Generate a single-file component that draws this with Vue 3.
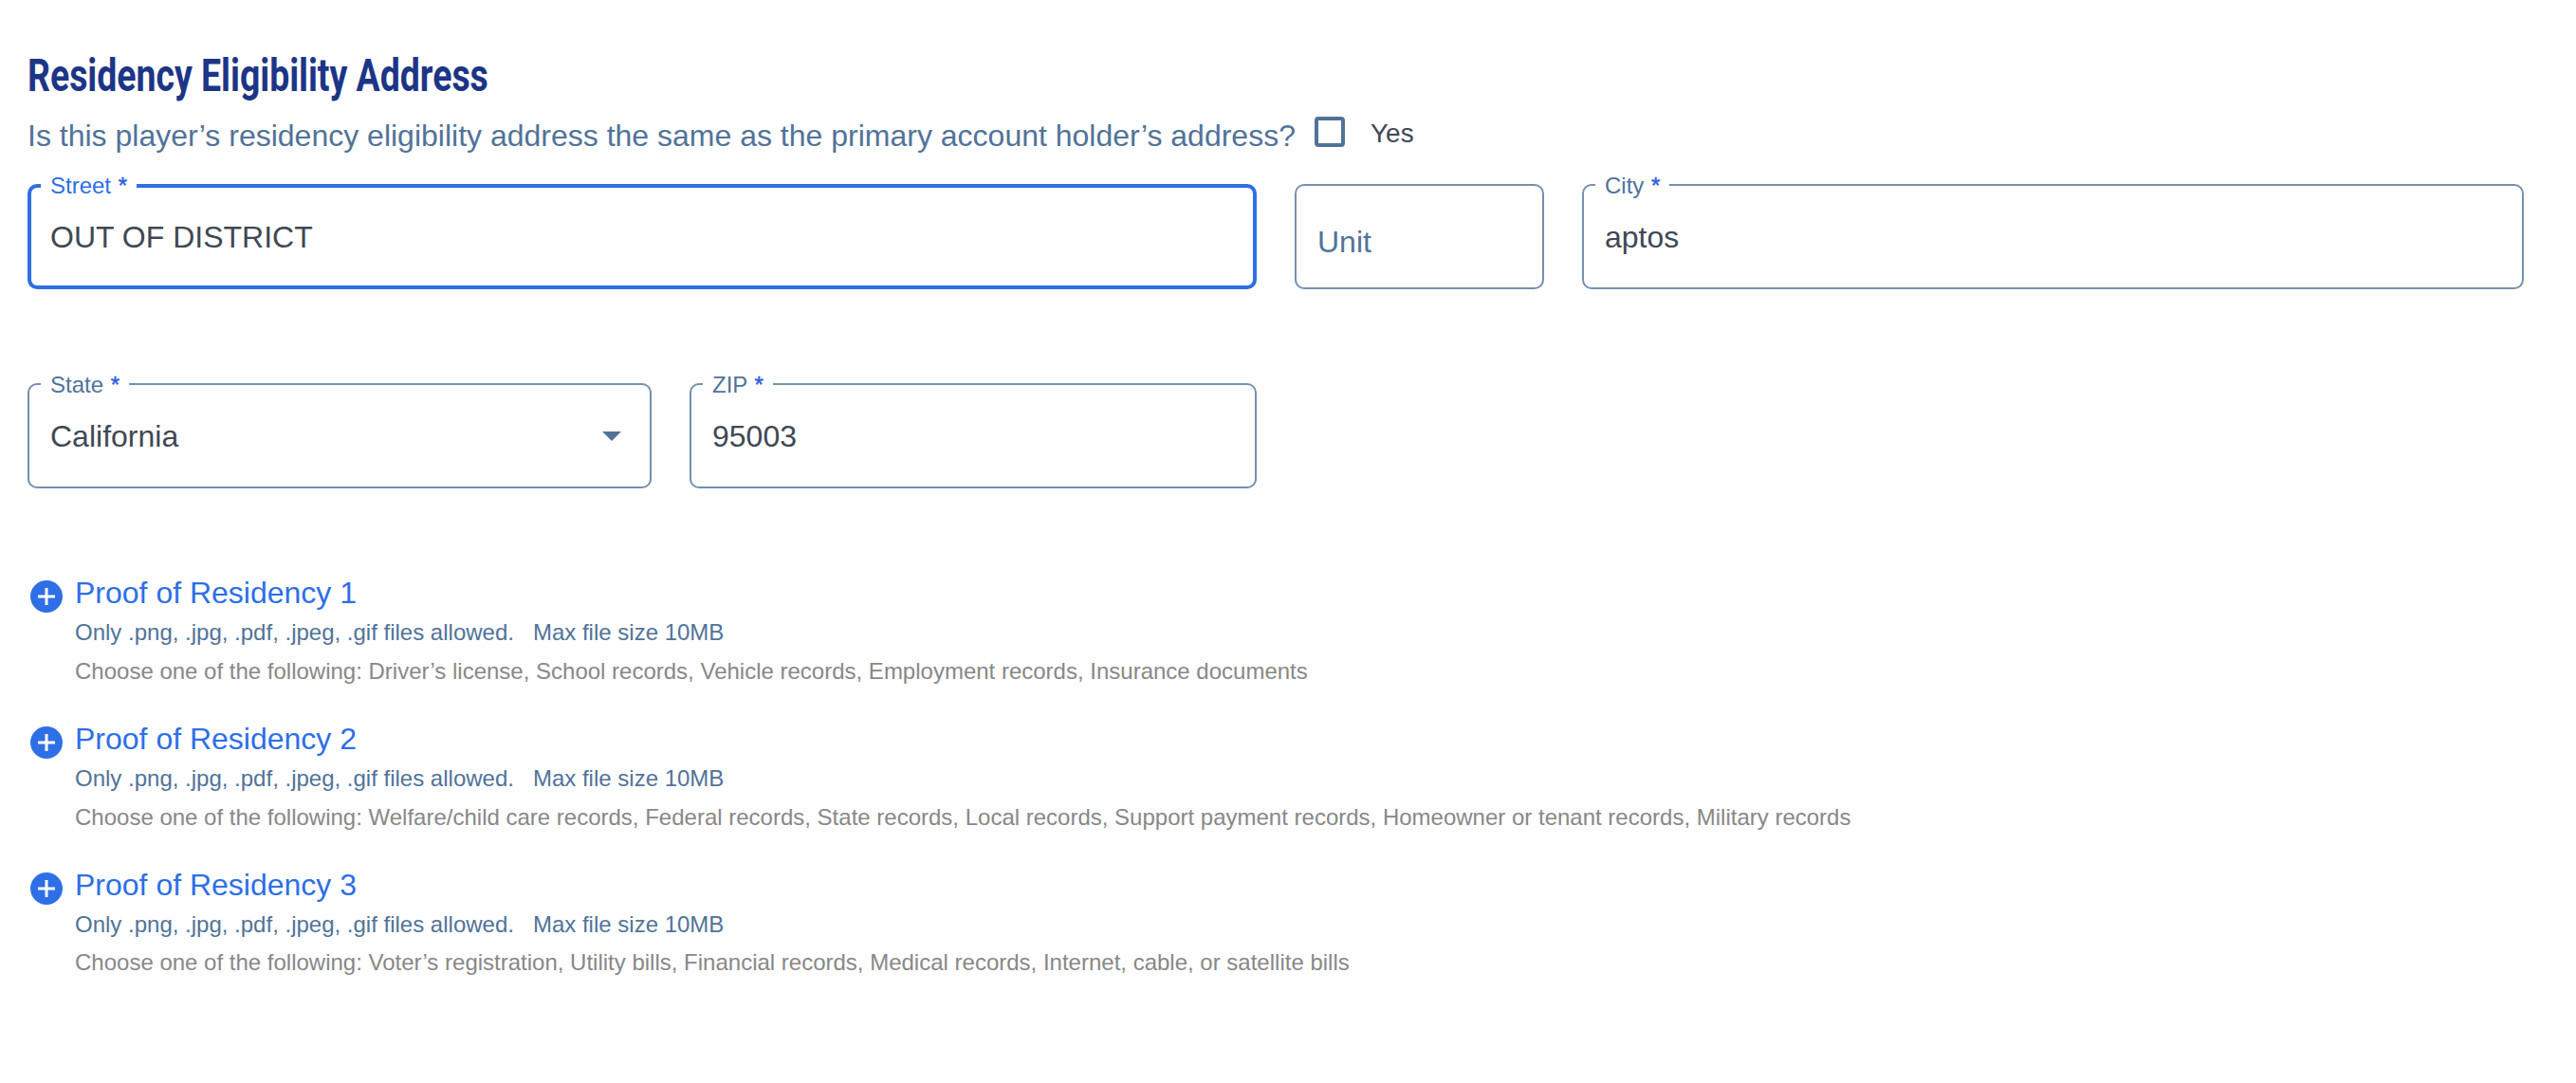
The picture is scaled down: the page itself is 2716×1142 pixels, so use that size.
<script setup>
const proofs = [
  { title: 'Proof of Residency 1', docs: 'Driver’s license, School records, Vehicle records, Employment records, Insurance documents' },
  { title: 'Proof of Residency 2', docs: 'Welfare/child care records, Federal records, State records, Local records, Support payment records, Homeowner or tenant records, Military records' },
  { title: 'Proof of Residency 3', docs: 'Voter’s registration, Utility bills, Financial records, Medical records, Internet, cable, or satellite bills' },
]
</script>

<template>
  <main class="page">
    <h2 class="title"><span>Residency Eligibility Address</span></h2>
    <div class="question">
      <span>Is this player’s residency eligibility address the same as the primary account holder’s address?</span>
      <label class="check"><span class="box"></span><span>Yes</span></label>
    </div>

    <div class="row">
      <div class="field street active">
        <span class="label">Street <span class="req">*</span></span>
        <span>OUT OF DISTRICT</span>
      </div>
      <div class="field unit"><span>Unit</span></div>
      <div class="field city">
        <span class="label">City <span class="req">*</span></span>
        <span>aptos</span>
      </div>
    </div>
    <div class="row second">
      <div class="field state">
        <span class="label">State <span class="req">*</span></span>
        <span>California</span>
        <svg class="caret" viewBox="0 0 20 10"><path d="M0 0H20L10 10Z" /></svg>
      </div>
      <div class="field zip">
        <span class="label">ZIP <span class="req">*</span></span>
        <span>95003</span>
      </div>
    </div>

    <section class="proofs">
      <article v-for="p in proofs" :key="p.title" class="proof">
        <svg class="plus" viewBox="0 0 34 34"><circle cx="17" cy="17" r="17" /><path d="M8 17H26M17 8V26" /></svg>
        <div>
          <h3>{{ p.title }}</h3>
          <p class="rules"><span>Only .png, .jpg, .pdf, .jpeg, .gif files allowed.</span><span>Max file size 10MB</span></p>
          <p class="docs">Choose one of the following: {{ p.docs }}</p>
        </div>
      </article>
    </section>
  </main>
</template>

<style>
body { background: #fefefe; }
</style>

<style scoped>
.page { box-sizing: border-box; width: 2716px; height: 1142px; padding: 50px 55px 0 29px; font-family: "Liberation Sans", Arial, sans-serif; overflow: hidden; white-space: nowrap; }
.title { margin: 0; height: 62px; font: 700 48px/60px Roboto, sans-serif; color: #1c3586; }
.title span { display: inline-block; transform: scaleX(0.779); transform-origin: 0 50%; }
.question { display: flex; height: 82px; font-size: 32px; line-height: 62px; color: #517399; }
.check { display: flex; margin-left: 20px; font-size: 28px; line-height: 58px; color: #3f4853; }
.box { box-sizing: border-box; width: 32px; height: 32px; margin: 11px 27px 0 0; border: 4px solid #517399; border-radius: 4px; }

.row { display: flex; gap: 40px; }
.second { margin-top: 99px; }
.field { position: relative; box-sizing: border-box; display: flex; align-items: center; height: 111px; padding: 0 22px; border: 2px solid #7690ae; border-radius: 10px; font-size: 32px; line-height: 40px; color: #3f4853; }
.label { position: absolute; top: -12px; left: 12px; padding: 0 10px; background: #fefefe; font-size: 24px; line-height: 24px; color: #517399; }
.req { margin-left: 1px; color: #2c5fdb; -webkit-text-stroke: 0.5px #2c5fdb; }
.active { padding: 0 20px; border: 4px solid #2e6fe6; }
.active .label { top: -14px; left: 10px; color: #2e6fe6; }
.street { width: 1296px; }
.unit { width: 263px; padding-top: 10px; color: #517399; }
.city { width: 993px; }
.state { width: 658px; justify-content: space-between; }
.caret { width: 20px; height: 10px; margin-right: 8px; fill: #517399; }
.zip { width: 598px; }

.proofs { margin-top: 90px; }
.proof { display: flex; height: 154px; }
.plus { flex: none; width: 34px; height: 34px; margin: 7px 13px 0 3px; fill: #2e6fe6; }
.plus path { stroke: #fff; stroke-width: 3; fill: none; }
h3 { margin: 0; height: 42px; font-size: 32px; font-weight: 400; line-height: 40px; color: #2e6fe6; }
p { margin: 0; height: 41px; font-size: 24px; line-height: 40px; }
.rules { display: flex; gap: 20px; color: #517399; }
.docs { color: #888; }
.proof:last-child .docs { line-height: 38px; }
</style>
